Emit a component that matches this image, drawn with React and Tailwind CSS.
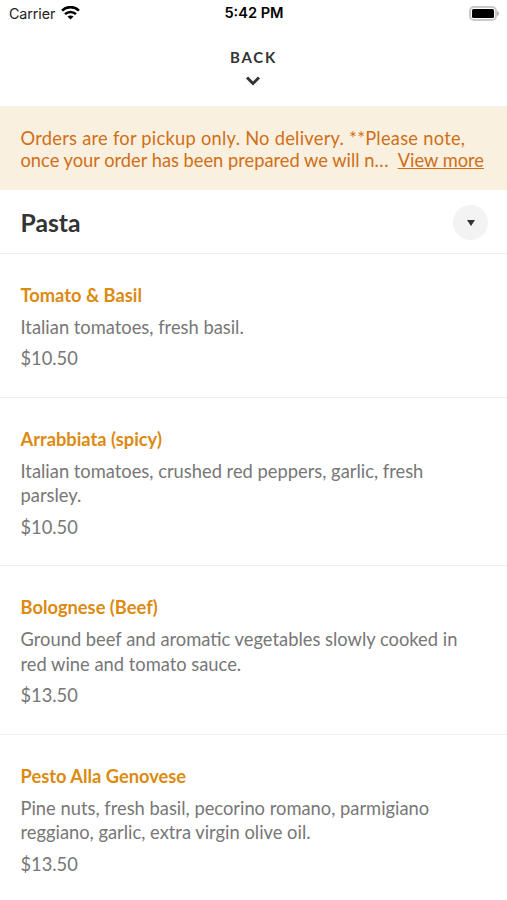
// src/App.jsx
const items = [
  { id: 1, name: 'Tomato & Basil', lines: ['Italian tomatoes, fresh basil.'], price: '$10.50' },
  { id: 2, name: 'Arrabbiata (spicy)', lines: ['Italian tomatoes, crushed red peppers, garlic, fresh', 'parsley.'], price: '$10.50' },
  { id: 3, name: 'Bolognese (Beef)', lines: ['Ground beef and aromatic vegetables slowly cooked in', 'red wine and tomato sauce.'], price: '$13.50' },
  { id: 4, name: 'Pesto Alla Genovese', lines: ['Pine nuts, fresh basil, pecorino romano, parmigiano', 'reggiano, garlic, extra virgin olive oil.'], price: '$13.50' },
];

const StatusBar = () => (
  <div className="grid h-7 grid-cols-3 items-center pr-2 pl-[9px] font-['Inter',sans-serif] text-black">
    <div className="-mt-px flex items-center gap-1.5 text-[14.3px] text-[#222]">
      <span className="tracking-[-0.1px]">Carrier</span>
      <svg className="-mt-0.5" width="19" height="14" viewBox="0 0 19 14" fill="none" stroke="#000" strokeWidth="2.6">
        <path d="M1 4.600C5.800-.1 13.200-.1 18 4.600" />
        <path d="M4 8.100C7.100 5.200 11.900 5.200 15 8.100" />
        <path d="M9.500 13.500 6.500 10.600C8.200 9.200 10.800 9.200 12.500 10.600Z" fill="#000" stroke="none" />
      </svg>
    </div>
    <span className="text-center text-[14.6px] font-semibold whitespace-nowrap">5:42 PM</span>
    <svg className="-mt-0.5 justify-self-end" width="30" height="15" viewBox="0 0 30 15">
      <rect x="1" y="1" width="26" height="13" rx="4" fill="none" stroke="#c9c9c9" strokeWidth="2" />
      <rect x="3" y="3" width="22" height="9" rx="1.500" fill="#000" />
      <path d="M28 5C31 6 31 9 28 10Z" fill="#b5b5b5" />
    </svg>
  </div>
);

const MenuItem = ({ item }) => (
  <article className="border-b border-[#efefef] px-[20.500px] pt-[29px] pb-[26.500px]">
    <h3 className="text-[18.300px] leading-6 font-bold text-[#dc8a10]">{item.name}</h3>
    <p className="mt-2 text-[18.330px] leading-[24.500px] text-[#777]">
      {item.lines.map((line) => (
        <span key={line} className="block whitespace-nowrap">{line}</span>
      ))}
    </p>
    <p className="mt-[7px] text-[18.300px] leading-6 text-[#777]">{item.price}</p>
  </article>
);

const App = () => {
  return (
    <main className="h-[900px] w-[507px] overflow-hidden bg-white font-['Lato',sans-serif]">
      <StatusBar />
      <button className="flex h-[78px] w-full flex-col items-center pt-[19px] text-[#333]">
        <span className="text-[15px] leading-5 font-bold tracking-[1.800px]">BACK</span>
        <svg className="mt-[9px] mr-px" width="14" height="10" viewBox="0 0 14 10" fill="none" stroke="currentColor" strokeWidth="3">
          <path d="m1 1.500 6 6 6-6" />
        </svg>
      </button>
      <section className="h-[84px] border-t border-[#f3f1ee] bg-[#faf0df] pt-5 pr-[23px] pl-[20.500px] text-[18.300px] leading-[22px] text-[#cf6f17]">
        <p className="tracking-[0.260px] whitespace-nowrap">Orders are for pickup only. No delivery. **Please note,</p>
        <div className="flex justify-between whitespace-nowrap">
          <p>once your order has been prepared we will n<span className="tracking-[0.6px]">...</span></p>
          <a className="underline">View more</a>
        </div>
      </section>
      <header className="flex h-[63.600px] items-center justify-between border-b border-[#efefef] pr-[19px] pl-[20.500px]">
        <h2 className="pt-[3px] text-[24.700px] font-bold text-[#333]">Pasta</h2>
        <button className="mt-[3px] flex size-[35px] items-center justify-center rounded-full bg-[#f3f3f3]">
          <svg width="8" height="6" viewBox="0 0 8 6" fill="#333"><path d="M0 0H8L4 6Z" /></svg>
        </button>
      </header>
      {items.map((item) => <MenuItem key={item.id} item={item} />)}
    </main>
  );
};

export default App;
